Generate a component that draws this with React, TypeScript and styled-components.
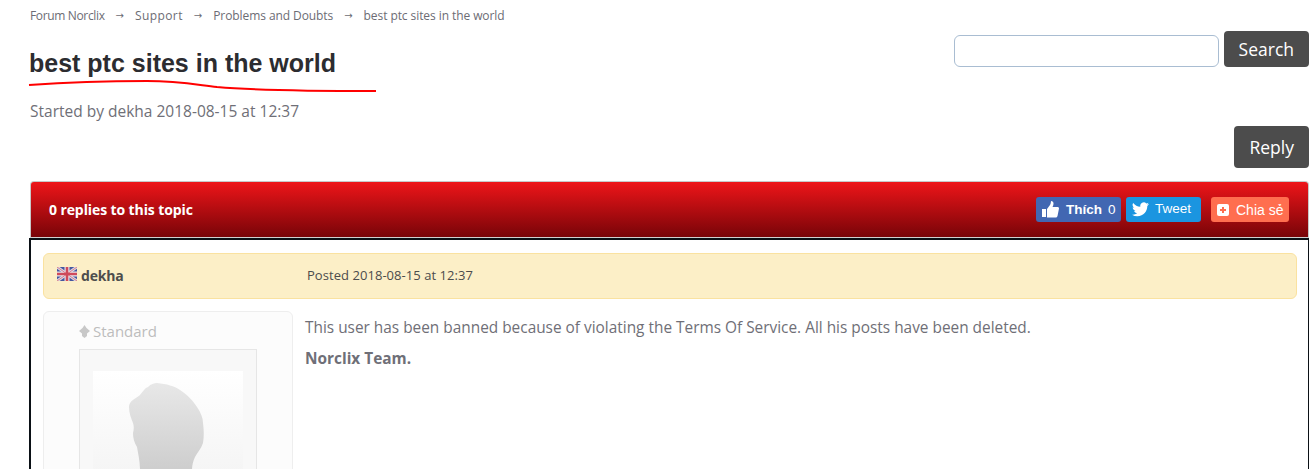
import React from 'react';
import styled, { createGlobalStyle } from 'styled-components';

const Global = createGlobalStyle`
html, body {
  margin: 0;
  padding: 0;
  background: #fff;
}
body {
  font-family: 'Open Sans', 'Noto Sans', sans-serif;
  color: #6f6f77;
}
`

const Page = styled.div`
  width: 1313px;
  height: 469px;
  overflow: hidden;
  padding: 0 4px 0 29px;
  box-sizing: border-box;
`

const Crumbs = styled.nav`
  display: flex;
  align-items: center;
  height: 31px;
  padding-left: 1px;
  font-size: 12px;
  color: #6c6c74;
`

const Crumb = styled.span<{ $track: number }>`
  letter-spacing: ${p => p.$track}px;
`

const Arrow = styled.span`
  margin: 0 11px;
  font-family: 'DejaVu Sans', sans-serif;
  font-size: 10px;
`

const Top = styled.div`
  display: flex;
  justify-content: space-between;
  align-items: flex-start;
`

const TitleBlock = styled.div`
  padding: 16px 0 0 1px;
`

const Title = styled.h1`
  position: relative;
  margin: 0 0 0 -1px;
  font-family: 'Liberation Sans', Arial, sans-serif;
  font-size: 25px;
  font-weight: 700;
  line-height: 32px;
  color: #2c2c30;
`

const Scribble = styled.svg`
  position: absolute;
  left: -2px;
  top: 30px;
`

const Started = styled.div`
  margin-top: 22px;
  font-size: 15.500px;
  line-height: 20px;
  color: #6f6f77;
`

const SearchForm = styled.form`
  display: flex;
  align-items: flex-start;
  gap: 5px;
`

const SearchInput = styled.input`
  width: 265px;
  height: 32px;
  margin-top: 4px;
  box-sizing: border-box;
  border: 1px solid #a9bdd2;
  border-radius: 6px;
  background: #fff;
`

const DarkButton = styled.button<{ $big?: boolean }>`
  font-family: 'Open Sans', sans-serif;
  color: #fff;
  background: #4c4c4c;
  border: 0;
  border-radius: 4px;
  height: ${p => (p.$big ? 42 : 36)}px;
  padding: 0 15px;
  font-size: 17.500px;
`

const ReplyRow = styled.div`
  display: flex;
  justify-content: flex-end;
  margin-top: 5px;
  height: 55px;
`

const PanelHead = styled.div`
  display: flex;
  justify-content: space-between;
  align-items: center;
  height: 57px;
  margin-left: 1px;
  box-sizing: border-box;
  padding: 0 19px 0 18px;
  border: 1px solid #c8c8c8;
  border-bottom-color: #d0d0d0;
  border-radius: 4px 4px 0 0;
  background: linear-gradient(#ee1519, #780408);
  color: #fff;
  font-size: 14px;
  font-weight: 700;
  letter-spacing: -0.1px;
`

const Shares = styled.div`
  display: flex;
  align-items: center;
`

const Share = styled.span<{ $bg: string; $w: number; $ml?: number }>`
  display: flex;
  align-items: center;
  box-sizing: border-box;
  width: ${p => p.$w}px;
  height: 25px;
  margin-left: ${p => p.$ml ?? 0}px;
  padding-left: 6px;
  gap: 6px;
  border-radius: 3px;
  background: ${p => p.$bg};
  font-family: 'Liberation Sans', Arial, sans-serif;
  font-size: 13.500px;
  font-weight: 400;
  letter-spacing: 0;
  color: #fff;
  white-space: pre;
  b { font-weight: 700; margin-right: 6px; margin-left: 1px; }
`

const TweetLabel = styled.span`
  margin-top: -3px;
`

const ChiaLabel = styled.span`
  margin-left: 1px;
  font-size: 14px;
`

const PanelBody = styled.div`
  height: 400px;
  box-sizing: border-box;
  border: 2px solid #0b1116;
  border-bottom: 0;
  border-right-width: 1px;
  padding: 13px 11px 0 12px;
`

const PostHead = styled.div`
  display: flex;
  align-items: center;
  height: 46px;
  box-sizing: border-box;
  padding: 0 0 2px 13px;
  background: #fcefc7;
  border: 1px solid #fae2a0;
  border-radius: 6px;
`

const Author = styled.div`
  display: flex;
  align-items: center;
  gap: 4px;
  width: 250px;
  font-size: 14px;
  font-weight: 700;
  letter-spacing: -0.2px;
  color: #4d4d4d;
`

const FlagIcon = styled.svg`
  margin-top: -2px;
`

const Posted = styled.div`
  font-size: 13px;
  letter-spacing: 0.05px;
  color: #4c4c4c;
`

const PostRow = styled.div`
  display: flex;
  margin-top: 12px;
`

const Side = styled.aside`
  width: 250px;
  height: 300px;
  flex: none;
  box-sizing: border-box;
  padding: 9px 0 0 35px;
  background: #fcfcfc;
  border: 1px solid #eeeeee;
  border-radius: 6px;
`

const Rank = styled.div`
  display: flex;
  align-items: center;
  gap: 3px;
  height: 20px;
  font-size: 15px;
  color: #bdbdbd;
`

const AvatarFrame = styled.div`
  width: 178px;
  height: 200px;
  box-sizing: border-box;
  margin-top: 8px;
  padding: 21px 13px;
  background: #f8f8f8;
  border: 1px solid #e6e6e6;
`

const Avatar = styled.svg`
  display: block;
`

const Content = styled.div`
  margin-left: 12px;
  font-size: 15.400px;
  line-height: 20px;
  color: #6f6f77;
  p { margin: 7px 0 11px; }
`

const Flag = () => (
  <FlagIcon width="20" height="14" viewBox="0 0 20 14">
    <rect width="20" height="14" fill="#45579f" />
    <path d="M0 0L20 14M20 0L0 14" stroke="#dcd8e2" strokeWidth="3" />
    <path d="M10 0V14M0 7H20" stroke="#e9e4ea" strokeWidth="5" />
    <path d="M0 0L20 14M20 0L0 14" stroke="#d8808f" strokeWidth="1" />
    <path d="M10 0V14M0 7H20" stroke="#cf4a5a" strokeWidth="2.600" />
  </FlagIcon>
)

export default function App() {
  return (
    <Page>
      <Global />
      <Crumbs>
        <Crumb $track={-0.35}>Forum Norclix</Crumb>
        <Arrow>→</Arrow>
        <Crumb $track={0.4}>Support</Crumb>
        <Arrow>→</Arrow>
        <Crumb $track={-0.08}>Problems and Doubts</Crumb>
        <Arrow>→</Arrow>
        <Crumb $track={-0.08}>best ptc sites in the world</Crumb>
      </Crumbs>
      <Top>
        <TitleBlock>
          <Title>
            best ptc sites in the world
            <Scribble width="350" height="16" viewBox="0 0 350 16">
              <path d="M2 8 C 30 6, 80 4, 120 4 C 150 4, 165 7, 190 10 C 225 13, 270 14, 349 14" fill="none" stroke="#f00" strokeWidth="2" />
            </Scribble>
          </Title>
          <Started>Started by dekha 2018-08-15 at 12:37</Started>
        </TitleBlock>
        <SearchForm>
          <SearchInput />
          <DarkButton type="button">Search</DarkButton>
        </SearchForm>
      </Top>
      <ReplyRow>
        <DarkButton type="button" $big>Reply</DarkButton>
      </ReplyRow>
      <PanelHead>
        <span>0 replies to this topic</span>
        <Shares>
          <Share $bg="#4267b2" $w={85}>
            <svg width="17" height="17" viewBox="0 0 17 17" fill="#fff">
              <path d="M0 8h4v8H0zM5 8l3-4c.6-1 .8-2 1-4 1.600 0 2.500 1 2.500 2.500 0 1.500-.5 2.500-1 3.500H15.500c1 0 1.500.7 1.500 1.500l-1.500 7.500c-.2.800-.8 1.500-1.800 1.500H5z" />
            </svg>
            <span><b>Thích</b>0</span>
          </Share>
          <Share $bg="#1b95e0" $w={75} $ml={5}>
            <svg width="17" height="15" viewBox="0 0 24 20" fill="#fff">
              <path d="M24 2.400a9.800 9.800 0 0 1-2.800.8A5 5 0 0 0 23.300.5a9.800 9.800 0 0 1-3.100 1.200 4.900 4.900 0 0 0-8.400 4.500A14 14 0 0 1 1.700.9a4.900 4.900 0 0 0 1.500 6.600 4.900 4.900 0 0 1-2.200-.6c0 2.400 1.700 4.400 3.900 4.900a4.900 4.900 0 0 1-2.200.1 4.900 4.900 0 0 0 4.600 3.400A9.900 9.900 0 0 1 0 17.300 14 14 0 0 0 7.500 19.500c9.100 0 14.100-7.500 14.100-14v-.6A10 10 0 0 0 24 2.400z" />
            </svg>
            <TweetLabel>Tweet</TweetLabel>
          </Share>
          <Share $bg="#ff6e4f" $w={78} $ml={10}>
            <svg width="12" height="12" viewBox="0 0 12 12">
              <rect width="12" height="12" rx="2" fill="#fff" />
              <path d="M6 3v6M3 6h6" stroke="#ff6e4f" strokeWidth="2" />
            </svg>
            <ChiaLabel>Chia sẻ</ChiaLabel>
          </Share>
        </Shares>
      </PanelHead>
      <PanelBody>
        <PostHead>
          <Author><Flag />dekha</Author>
          <Posted>Posted 2018-08-15 at 12:37</Posted>
        </PostHead>
        <PostRow>
          <Side>
            <Rank>
              <svg width="11" height="13" viewBox="0 0 11 13" fill="#c8c8c8">
                <path d="M5.500 0l2 3 3.500 3-3 2.500v2.500l-2.500 2-2.500-2V8.500L0 6l3.500-3z" />
              </svg>
              Standard
            </Rank>
            <AvatarFrame>
              <Avatar width="150" height="150" viewBox="0 0 150 150">
                <defs>
                  <linearGradient id="bg" x1="0" y1="0" x2="0" y2="1">
                    <stop offset="0" stopColor="#ffffff" />
                    <stop offset="1" stopColor="#f0f0f0" />
                  </linearGradient>
                  <linearGradient id="head" x1="0" y1="0" x2="0" y2="1">
                    <stop offset="0" stopColor="#e8e8e8" />
                    <stop offset="1" stopColor="#c4c4c4" />
                  </linearGradient>
                </defs>
                <rect width="150" height="150" fill="url(#bg)" />
                <path d="M36 36 C36 30 42 28 47 24 C50 20 52 17 55 16 C58 13 61 12 64 12 C74 13 81 15 87 19 C95 24 100 30 104 36 C108 42 110 47 110 52 C111 60 111 66 110 72 C108 78 104 82 102 86 C100 90 99 95 99 99 L98 130 L50 130 L47 99 C47 90 45 82 44 76 C41 71 40 67 40 62 C41 58 41 55 40 52 C38 47 36 42 36 36 Z" fill="url(#head)" />
              </Avatar>
            </AvatarFrame>
          </Side>
          <Content>
            <p>This user has been banned because of violating the Terms Of Service. All his posts have been deleted.</p>
            <p><strong>Norclix Team.</strong></p>
          </Content>
        </PostRow>
      </PanelBody>
    </Page>
  );
}
